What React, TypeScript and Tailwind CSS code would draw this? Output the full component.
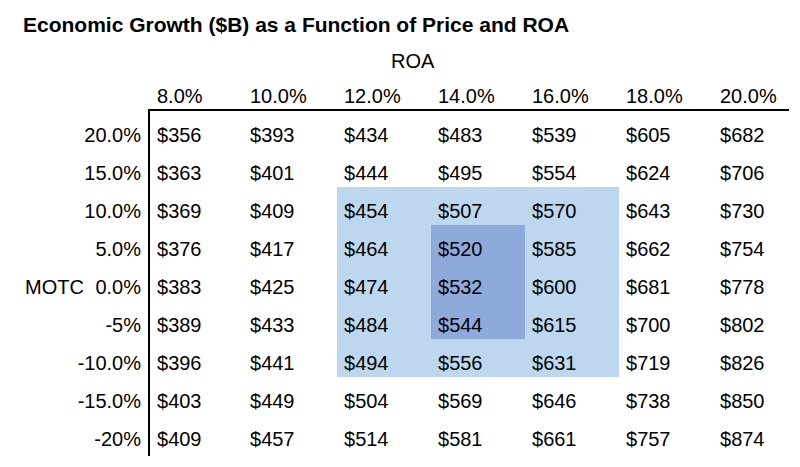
import React from 'react'

const ROA = ['8.0%', '10.0%', '12.0%', '14.0%', '16.0%', '18.0%', '20.0%']

const ROWS: { label: string; values: number[] }[] = [
    { label: '20.0%', values: [356, 393, 434, 483, 539, 605, 682] },
    { label: '15.0%', values: [363, 401, 444, 495, 554, 624, 706] },
    { label: '10.0%', values: [369, 409, 454, 507, 570, 643, 730] },
    { label: '5.0%', values: [376, 417, 464, 520, 585, 662, 754] },
    { label: '0.0%', values: [383, 425, 474, 532, 600, 681, 778] },
    { label: '-5%', values: [389, 433, 484, 544, 615, 700, 802] },
    { label: '-10.0%', values: [396, 441, 494, 556, 631, 719, 826] },
    { label: '-15.0%', values: [403, 449, 504, 569, 646, 738, 850] },
    { label: '-20%', values: [409, 457, 514, 581, 661, 757, 874] },
]

// light block: cols 2-4, rows 2-6 ; dark: col 3, rows 3-5
const shade = (r: number, c: number) => {
    if (c === 3 && r >= 3 && r <= 5) return 'bg-[#8eaadb]'
    if (c >= 2 && c <= 4 && r >= 2 && r <= 6) return 'bg-[#bdd7ee]'
    return ''
}

const COLS = 'grid grid-cols-[93px_94px_94px_94px_94px_94px_76px]'

export default function App() {
    return (
        <div
            className="w-[800px] h-[467px] overflow-hidden bg-white text-black"
            style={{ fontFamily: '"Liberation Sans", Arial, sans-serif' }}
        >
            <div className="pt-[14px] pl-[23px] h-[35px] text-[21px] leading-[21px] font-bold">
                Economic Growth ($B) as a Function of Price and ROA
            </div>

            <div className="mt-[16px] h-[20px] pl-[391px] text-[20px] leading-[20px]">ROA</div>

            <div className="mt-[1px] flex text-[20px] leading-[20px]">
                <div className="w-[150px] shrink-0" />
                <div className={COLS}>
                    {ROA.map((h) => (
                        <div key={h} className="h-[37px] pt-[14px] pl-[7px]">
                            {h}
                        </div>
                    ))}
                </div>
            </div>

            <div className="flex text-[20px] leading-[20px]">
                <div className="w-[148px] shrink-0 pt-[2px]">
                    {ROWS.map((row) => (
                        <div key={row.label} className="h-[38px] pt-[14px] pr-[7px] flex justify-between">
                            <span className="pl-[25px]">{row.label === '0.0%' ? 'MOTC' : ''}</span>
                            <span>{row.label}</span>
                        </div>
                    ))}
                </div>
                <div className="w-[641px] border-l-2 border-t-2 border-black pb-[3px]">
                    {ROWS.map((row, r) => (
                        <div key={row.label} className={COLS}>
                            {row.values.map((v, c) => (
                                <div key={c} className={`h-[38px] pt-[14px] pl-[7px] ${shade(r, c)}`}>
                                    ${v}
                                </div>
                            ))}
                        </div>
                    ))}
                </div>
            </div>
        </div>
    )
}
